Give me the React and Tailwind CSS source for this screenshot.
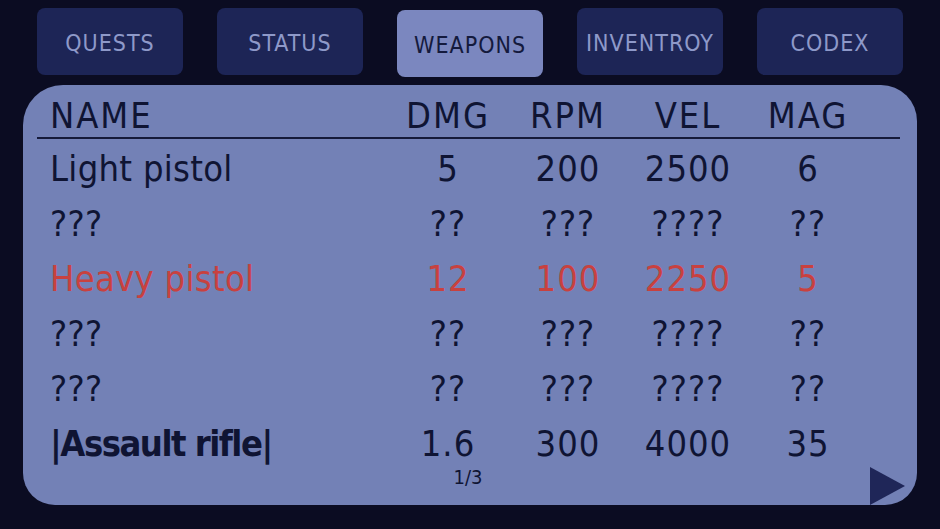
import React from "react";

const tabs = ["QUESTS", "STATUS", "WEAPONS", "INVENTROY", "CODEX"];

const rows = [
  { name: "Light pistol", dmg: "5", rpm: "200", vel: "2500", mag: "6" },
  { name: "???", dmg: "??", rpm: "???", vel: "????", mag: "??" },
  { name: "Heavy pistol", dmg: "12", rpm: "100", vel: "2250", mag: "5", red: true },
  { name: "???", dmg: "??", rpm: "???", vel: "????", mag: "??" },
  { name: "???", dmg: "??", rpm: "???", vel: "????", mag: "??" },
  { name: "|Assault rifle|", dmg: "1.6", rpm: "300", vel: "4000", mag: "35", bold: true },
];

const font = { fontFamily: '"DejaVu Sans Condensed", "DejaVu Sans", sans-serif' };

const App = () => {
  return (
    <div
      className="w-[940px] h-[529px] bg-[#0b0c22] overflow-hidden font-stretch-condensed"
      style={font}
    >
      <div className="flex gap-[34px] pl-[37px] pt-[8px]">
        {tabs.map((t) =>
          t === "WEAPONS" ? (
            <div
              key={t}
              className="w-[146px] h-[67px] translate-y-[2px] rounded-[8px] bg-[#7b87bf] flex items-center justify-center pt-[3px] text-[23px] text-[#141a3d] tracking-[1px]"
            >
              {t}
            </div>
          ) : (
            <div
              key={t}
              className="w-[146px] h-[67px] rounded-[8px] bg-[#1d2556] flex items-center justify-center pt-[3px] text-[23px] text-[#8e99c9] tracking-[1px]"
            >
              {t}
            </div>
          )
        )}
      </div>

      <div className="relative mt-[10px] mx-[23px] h-[420px] bg-[#7381b6] rounded-tl-[40px] rounded-tr-[36px] rounded-b-[32px] pt-[4px]">
        <div className="mx-[14px] mr-[17px] h-[50px] pb-[5px] border-b-2 border-[#151a3a] pl-[13px] grid grid-cols-[338px_120px_120px_120px_120px] items-center text-[36px] text-[#0f1433] tracking-[2px]">
          <div>NAME</div>
          <div className="text-center">DMG</div>
          <div className="text-center">RPM</div>
          <div className="text-center">VEL</div>
          <div className="text-center">MAG</div>
        </div>

        <div className="mx-[14px] pl-[13px] mt-[2px]">
          {rows.map((r, i) => (
            <div
              key={i}
              className={`h-[55px] grid grid-cols-[338px_120px_120px_120px_120px] items-center text-[36px] ${
                r.red ? "text-[#c8413f]" : "text-[#0f1433]"
              }`}
            >
              <div className={r.bold ? "font-bold tracking-[-1.5px]" : "tracking-[0.3px]"}>
                {r.name}
              </div>
              <div className="text-center tracking-[1px]">{r.dmg}</div>
              <div className="text-center tracking-[1px]">{r.rpm}</div>
              <div className="text-center tracking-[1px]">{r.vel}</div>
              <div className="text-center tracking-[1px]">{r.mag}</div>
            </div>
          ))}
          <div className="grid grid-cols-[338px_120px] -mt-[9px] text-[20px] text-[#0f1433]">
            <div></div>
            <div className="text-center pl-[40px]">1/3</div>
          </div>
        </div>

        <svg
          className="absolute right-[12px] bottom-0"
          width="35"
          height="38"
          viewBox="0 0 35 38"
        >
          <polygon points="0,0 35,19 0,38" fill="#1f2658" />
        </svg>
      </div>
    </div>
  );
};

export default App;
